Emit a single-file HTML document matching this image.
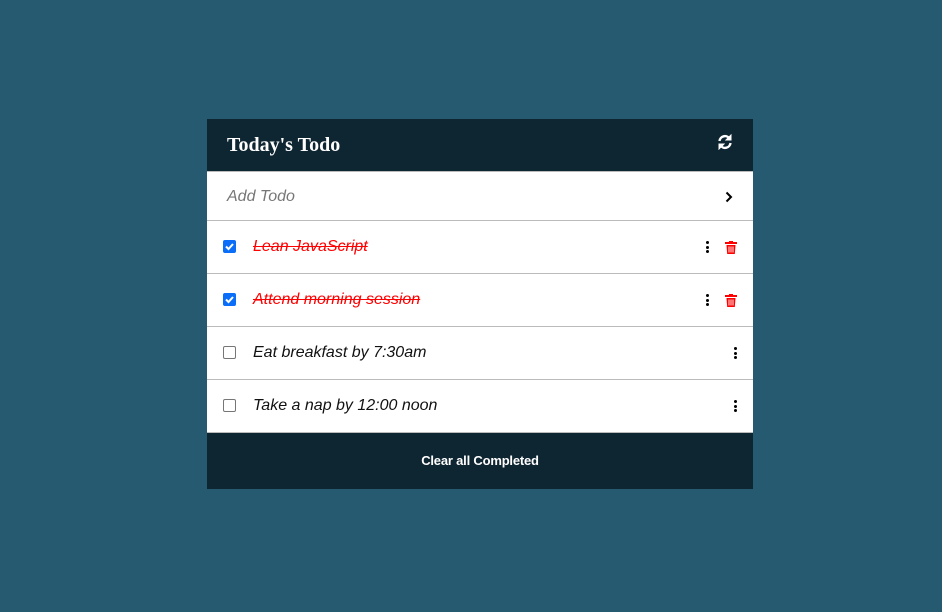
<!DOCTYPE html>
<html><head><style>
body{margin:0;width:942px;height:612px;background:#265a71;font-family:"Liberation Sans",sans-serif;position:relative;overflow:hidden}
.card{position:absolute;left:207px;top:119px;width:546px;height:370px;background:#fff}
.hd{position:absolute;left:0;top:0;width:546px;height:53px;background:#0e2532;border-bottom:1px solid #bbb;box-sizing:border-box}
.hd h1{position:absolute;left:20px;top:15px;margin:0;font-family:"Liberation Serif",serif;font-size:20px;font-weight:bold;color:#fff}
.row{position:absolute;left:0;width:546px;border-bottom:1px solid #bbb;box-sizing:border-box}
.t{position:absolute;left:46px;font-style:italic;font-size:16px;color:#111}
.done{color:#f00;text-decoration:line-through}
.cb{position:absolute;left:16px;width:13px;height:13px;box-sizing:border-box;border-radius:2px}
.on{background:#0b6ef9}
.off{border:1px solid #767676;background:#fff}
.dots{position:absolute;width:3px}
.dots i{display:block;width:3px;height:3px;background:#000;border-radius:50%;margin-bottom:1.5px}
.ft{position:absolute;left:0;top:314px;width:546px;height:56px;background:#0e2532;color:#fff;font-size:13px;font-weight:bold;letter-spacing:-0.2px;text-align:center;line-height:56px}
</style></head><body>
<div class="card">
<div class="hd"><h1>Today's Todo</h1>
<svg style="position:absolute;left:510px;top:15px" width="16" height="16" viewBox="0 0 16 16" fill="none" stroke="#fff" stroke-width="2.4"><path d="M2.5 7A5.5 5.5 0 0 1 12.5 4.5"/><path d="M13.5 9A5.5 5.5 0 0 1 3.5 11.5"/><path d="M14 1v5h-5z" fill="#fff" stroke-width="1"/><path d="M2 15v-5h5z" fill="#fff" stroke-width="1"/></svg>
</div>
<div class="row" style="top:53px;height:49px"><span class="t" style="left:20px;top:16px;color:#777">Add Todo</span>
<svg style="position:absolute;left:518px;top:19px" width="8" height="12" viewBox="0 0 8 12"><path d="M1.5 1.5l4.5 4.5-4.5 4.5" stroke="#000" stroke-width="2" fill="none"/></svg></div>
<div class="row" style="top:102px;height:53px"><div class="cb on" style="top:19px"><svg width="13" height="13"><path d="M3 6.5l2.5 2.5 4.5-5" stroke="#fff" stroke-width="2" fill="none"/></svg></div><span class="t done" style="top:17px">Lean JavaScript</span>
<div class="dots" style="left:499px;top:20px"><i></i><i></i><i></i></div>
<svg style="position:absolute;left:518px;top:20px" width="12" height="13" viewBox="0 0 12 13"><rect x="0" y="1" width="12" height="2" fill="#f00"/><rect x="4" y="0" width="4" height="2" fill="#f00"/><path d="M1.5 4h9l-.7 9h-7.6z" fill="#f00"/><path d="M4 5.5v6M6 5.5v6M8 5.5v6" stroke="#fff" stroke-width=".9"/></svg></div>
<div class="row" style="top:155px;height:53px"><div class="cb on" style="top:19px"><svg width="13" height="13"><path d="M3 6.5l2.5 2.5 4.5-5" stroke="#fff" stroke-width="2" fill="none"/></svg></div><span class="t done" style="top:17px">Attend morning session</span>
<div class="dots" style="left:499px;top:20px"><i></i><i></i><i></i></div>
<svg style="position:absolute;left:518px;top:20px" width="12" height="13" viewBox="0 0 12 13"><rect x="0" y="1" width="12" height="2" fill="#f00"/><rect x="4" y="0" width="4" height="2" fill="#f00"/><path d="M1.5 4h9l-.7 9h-7.6z" fill="#f00"/><path d="M4 5.5v6M6 5.5v6M8 5.5v6" stroke="#fff" stroke-width=".9"/></svg></div>
<div class="row" style="top:208px;height:53px"><div class="cb off" style="top:19px"></div><span class="t" style="top:17px">Eat breakfast by 7:30am</span>
<div class="dots" style="left:527px;top:20px"><i></i><i></i><i></i></div></div>
<div class="row" style="top:261px;height:53px"><div class="cb off" style="top:19px"></div><span class="t" style="top:17px">Take a nap by 12:00 noon</span>
<div class="dots" style="left:527px;top:20px"><i></i><i></i><i></i></div></div>
<div class="ft">Clear all Completed</div>
</div>
</body></html>
